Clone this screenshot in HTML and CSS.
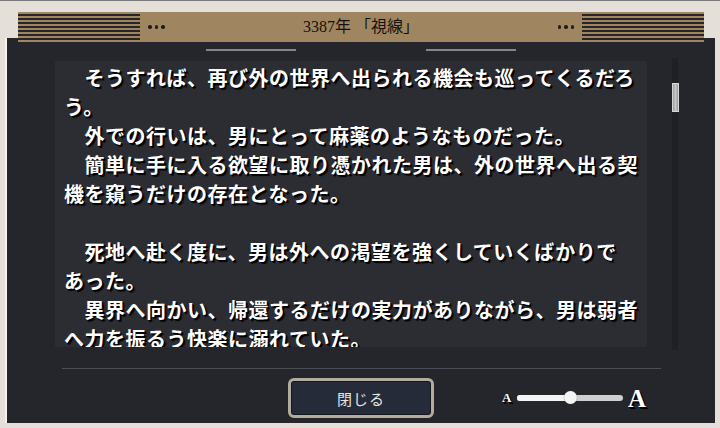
FILE: index.html
```html
<!DOCTYPE html>
<html lang="ja">
<head>
<meta charset="utf-8">
<title>3387年 「視線」</title>
<link rel="stylesheet" href="styles.css">
</head>
<body>
<div class="screen">
  <header class="titlebar">
    <div class="stripes"></div>
    <div class="dots"><span></span><span></span><span></span></div>
    <h1 class="title">3387年 「視線」</h1>
    <div class="dots"><span></span><span></span><span></span></div>
    <div class="stripes"></div>
  </header>
  <main class="panel">
    <div class="tabs"><span class="tab"></span><span class="tab"></span></div>
    <div class="reader">
      <div class="textbox">
        <p>　そうすれば、再び外の世界へ出られる機会も巡ってくるだろ<br>う。</p>
        <p>　外での行いは、男にとって麻薬のようなものだった。</p>
        <p>　簡単に手に入る欲望に取り憑かれた男は、外の世界へ出る契<br>機を窺うだけの存在となった。</p>
        <p class="blank">&nbsp;</p>
        <p>　死地へ赴く度に、男は外への渇望を強くしていくばかりで<br>あった。</p>
        <p>　異界へ向かい、帰還するだけの実力がありながら、男は弱者<br>へ力を振るう快楽に溺れていた。</p>
      </div>
      <div class="scrollbar"><div class="thumb"></div></div>
    </div>
    <div class="divider"></div>
    <footer class="controls">
      <div class="spacer"></div>
      <button class="close-btn" type="button"><span>閉じる</span></button>
      <div class="fontsize">
        <span class="a-small">A</span>
        <div class="track"><div class="fill"></div><div class="knob"></div></div>
        <span class="a-big">A</span>
      </div>
    </footer>
  </main>
</div>
</body>
</html>
```

FILE: styles.css
```css
* { box-sizing: border-box; }
html, body {
  margin: 0;
  padding: 0;
  width: 720px;
  height: 428px;
  overflow: hidden;
  background: #e4dfd9;
}
body {
  border-top: 1px solid #7a7a7a;
  font-family: "Liberation Serif", "Noto Sans CJK JP", serif;
}
.screen {
  padding-top: 11px;
}
.titlebar {
  position: relative;
  z-index: 1;
  height: 30px;
  margin: 0 16px -4px 18px;
  background: #a08660;
  display: flex;
  align-items: center;
}
.stripes {
  width: 122px;
  height: 28px;
  background: repeating-linear-gradient(to bottom, #a08660 0 1px, #25252a 1px 2.6px, #a08660 2.6px 4px);
}
.dots {
  display: flex;
  gap: 3px;
  margin: 0 8px;
}
.dots span {
  width: 3.5px;
  height: 3.5px;
  border-radius: 50%;
  background: #1e1e1e;
}
.title {
  flex: 1;
  margin: 0;
  text-align: center;
  font-size: 16px;
  font-weight: normal;
  color: #141210;
  line-height: 30px;
}
.panel {
  height: 385px;
  margin: 0 5px 0 7px;
  background: #25262b;
  box-shadow: -2px 0 0 #f6f3ef;
  display: flex;
  flex-direction: column;
}
.tabs {
  margin-top: 11px;
  display: flex;
  justify-content: center;
  gap: 130px;
}
.tab {
  width: 90px;
  height: 2px;
  background: #85868a;
}
.reader {
  margin-top: 7px;
  display: flex;
  align-items: flex-start;
}
.textbox {
  margin: 3px 0 0 48px;
  width: 592px;
  height: 286px;
  overflow: hidden;
  background: #2c2d33;
  padding: 2px 6px 0 9px;
  color: #fff;
  font-family: "Noto Sans CJK JP", sans-serif;
  font-weight: 700;
  font-size: 20px;
  letter-spacing: 0.5px;
  line-height: 29px;
  text-shadow: 2px 2px 1px #000, 1px 1px 0 #000;
}
.textbox p {
  margin: 0;
  white-space: nowrap;
}
.scrollbar {
  margin-left: 25px;
  width: 6px;
  height: 292px;
  background: #1f2024;
  padding-top: 25px;
}
.thumb {
  width: 7px;
  height: 29px;
  border: 1px solid #d6d6d6;
  background: linear-gradient(to right, #9c9c9c, #c8c8c8 50%, #9a9a9a);
}
.divider {
  margin: 18px 0 0 55px;
  width: 599px;
  height: 1px;
  background: #4b4e56;
}
.controls {
  margin-top: 9px;
  height: 40px;
  display: grid;
  grid-template-columns: 1fr auto 1fr;
  align-items: center;
}
.close-btn {
  width: 146px;
  height: 40px;
  padding: 0;
  border: 3px solid #b2ac9e;
  border-radius: 6px;
  background: #252b38;
  box-shadow: inset 0 0 0 1px #15171c;
  color: #e4e4e4;
  font-family: "Liberation Serif", "Noto Sans CJK JP", serif;
  font-size: 15px;
  letter-spacing: 1px;
}
.fontsize {
  margin-left: 68px;
  display: flex;
  align-items: center;
}
.a-small, .a-big {
  font-family: "Liberation Serif", serif;
  font-weight: 700;
  color: #fff;
  text-shadow: 1px 1px 0 #000, 2px 2px 0 #000;
}
.a-small {
  font-size: 13px;
  width: 12px;
  margin-right: 3px;
}
.a-big {
  font-size: 25px;
  margin-left: 5px;
  line-height: 1;
}
.track {
  position: relative;
  width: 106px;
  height: 6px;
  border-radius: 3px;
  background: #cfcfcf;
}
.fill {
  width: 53px;
  height: 6px;
  border-radius: 3px 0 0 3px;
  background: #f4f4f4;
}
.knob {
  position: absolute;
  left: 47px;
  top: -4px;
  width: 13px;
  height: 13px;
  border-radius: 50%;
  background: #f4f4f4;
  box-shadow: 0 0 1px #666;
}
```
